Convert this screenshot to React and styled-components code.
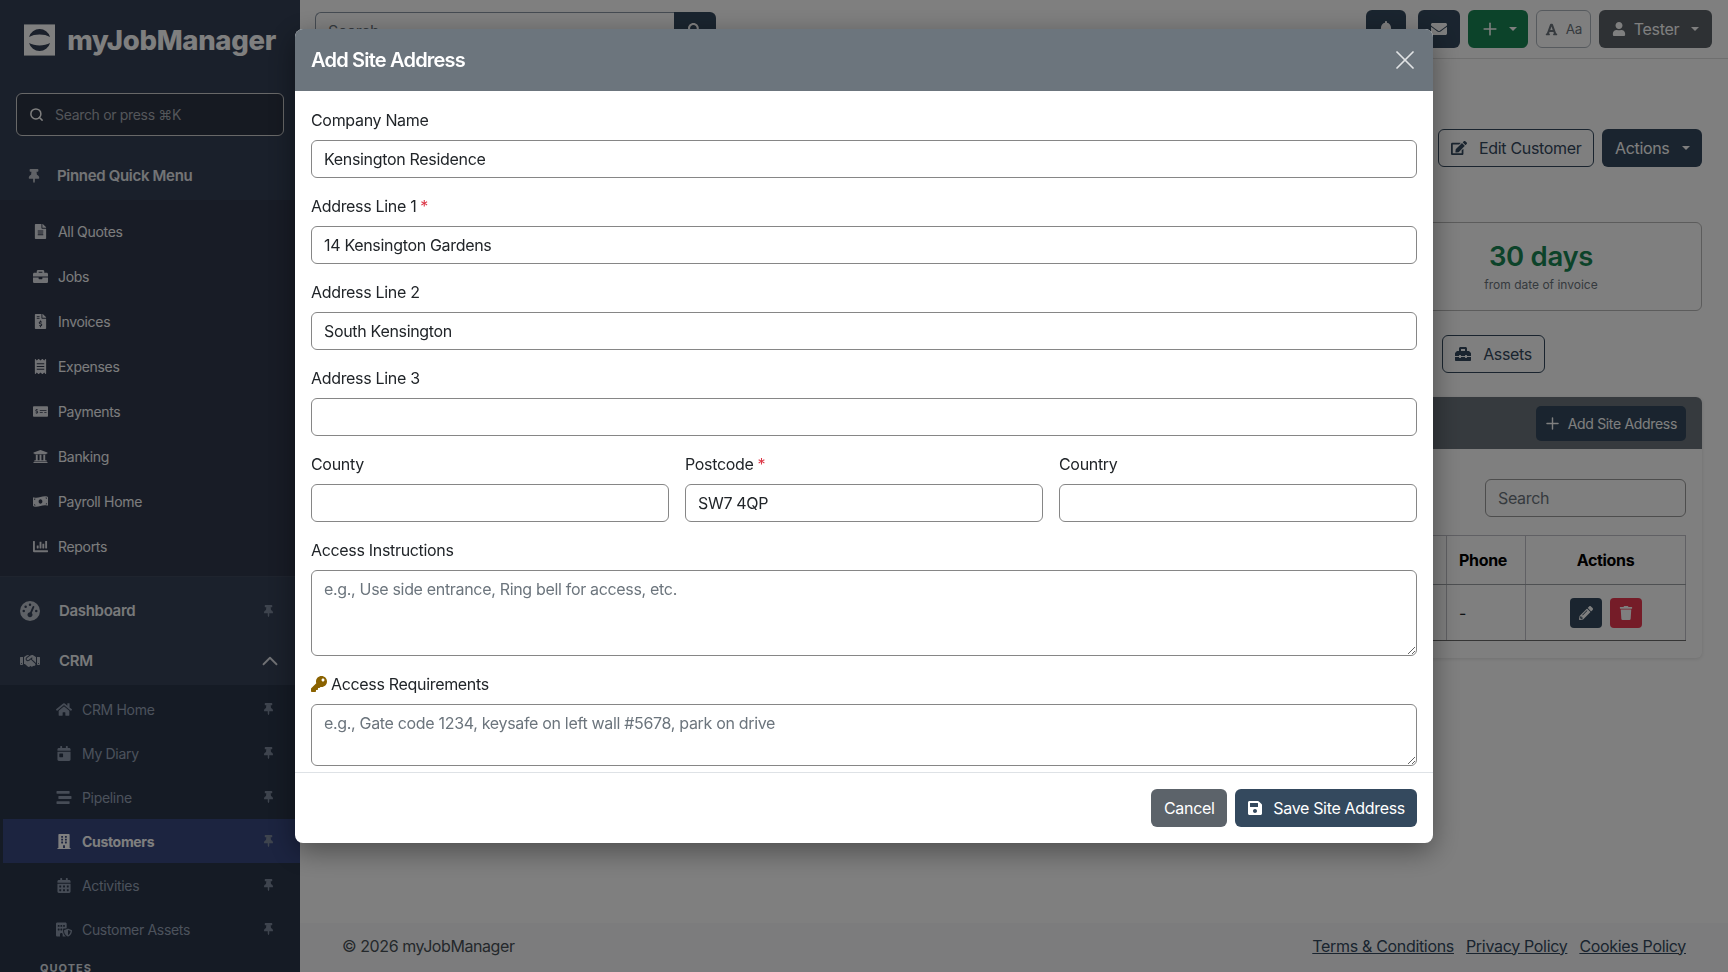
import React from 'react';
import styled, { createGlobalStyle } from 'styled-components';
import {
  FaBell,
  FaBriefcase,
  FaBuilding,
  FaCalendarAlt,
  FaCalendarDay,
  FaChartBar,
  FaEdit,
  FaEnvelope,
  FaFileAlt,
  FaFileInvoiceDollar,
  FaFont,
  FaHome,
  FaKey,
  FaMoneyBillWave,
  FaMoneyCheckAlt,
  FaPencilAlt,
  FaReceipt,
  FaSave,
  FaSearch,
  FaStream,
  FaThumbtack,
  FaToolbox,
  FaTrash,
  FaUniversity,
  FaUser,
} from 'react-icons/fa';
import { FaBuildingShield, FaGaugeHigh, FaHandshake } from 'react-icons/fa6';
import { ChevronUp, Plus, Search, X } from 'lucide-react';

const GlobalStyle = createGlobalStyle`
  * { box-sizing: border-box; }
  html, body { margin: 0; height: 100%; overflow: hidden; }
  body {
    font-family: Inter, "Liberation Sans", sans-serif;
    font-size: 16px;
    line-height: 1.5;
    letter-spacing: -0.02em;
    color: #212529;
    background: #fff;
  }
  button, input, textarea { letter-spacing: inherit; }
`;

const Shell = styled.div`
  display: flex;
  width: 1728px;
  height: 972px;
  overflow: hidden;
`;

/* ---------- sidebar ---------- */

const Sidebar = styled.aside`
  flex: 0 0 300px;
  height: 972px;
  overflow: hidden;
  background: #344056;
  color: #fff;
`;

const LogoRow = styled.div`
  display: flex;
  align-items: center;
  gap: 12px;
  padding: 24px 24px 37px;
`;

const LogoText = styled.span`
  font-size: 27.5px;
  line-height: 32px;
  font-weight: 800;
  letter-spacing: -0.3px;
  color: #fff;
`;

const SidebarSearch = styled.div`
  display: flex;
  align-items: center;
  gap: 11px;
  height: 43px;
  margin: 0 16px;
  padding: 0 12px;
  border: 1px solid #d0d0d0;
  border-radius: 6px;
  background: #2c3444;
  font-size: 14px;
  color: #a8acb4;

  svg { color: #fff; flex: none; }
`;

const PinnedHeader = styled.div`
  display: flex;
  align-items: center;
  gap: 16px;
  height: 48px;
  margin-top: 16px;
  padding-left: 27px;
  font-size: 15px;
  font-weight: 600;
  color: #e6e8ec;

  svg { color: #c0c4cc; font-size: 14px; flex: none; }
`;

const QuickList = styled.nav`
  padding: 9px 0 7px;
  background: #30384c;
  border-bottom: 1px solid #3e485c;
`;

const QuickItem = styled.a`
  display: flex;
  align-items: center;
  height: 45px;
  font-size: 14px;
  color: #f8f9fb;
`;

const QuickIcon = styled.span`
  display: flex;
  justify-content: center;
  width: 58px;
  padding: 0 1px 0 24px;
  font-size: 15px;
  color: #e0e2e8;
`;

const GroupList = styled.div`
  display: flex;
  flex-direction: column;
  gap: 2px;
  padding-top: 10px;
  background: #364258;
`;

const GroupRow = styled.div`
  display: flex;
  align-items: center;
  height: 48px;
  padding: 0 ${(p) => p.$right}px 0 20px;
  font-size: 15px;
  font-weight: 600;
  color: #f0f2f5;

  > svg:first-child { width: 20px; height: 20px; color: #bcc2cc; margin-right: 19px; flex: none; }
`;

const GroupLabel = styled.span`
  flex: 1;
`;

const PinIcon = styled(FaThumbtack)`
  width: 11px;
  height: 12px;
  color: #7c889c;
  flex: none;
`;

const SubList = styled.div`
  padding-top: 2px;
  background: #2a364a;
`;

const SubItem = styled.a`
  display: flex;
  align-items: center;
  height: 44px;
  margin-left: 3px;
  padding: 0 26px 0 53px;
  font-size: 14px;
  font-weight: ${(p) => (p.$active ? 700 : 400)};
  color: ${(p) => (p.$active ? '#fff' : '#98a4b8')};
  background: ${(p) => (p.$active ? '#384880' : 'transparent')};

  > span { flex: 1; }
  > svg:first-child {
    width: 16px;
    height: 15px;
    margin-right: 10px;
    color: ${(p) => (p.$active ? '#fff' : '#8c98ac')};
    flex: none;
  }
`;

const SectionCaption = styled.div`
  padding: 9px 0 0 40px;
  font-size: 11px;
  font-weight: 700;
  letter-spacing: 1px;
  color: #dfe2e8;
  background: #2a364a;
`;

/* ---------- page behind the dialog ---------- */

const Main = styled.main`
  flex: 1;
  min-width: 0;
  display: flex;
  flex-direction: column;
  height: 972px;
  background: #fff;
`;

const TopBar = styled.header`
  display: flex;
  align-items: center;
  justify-content: space-between;
  height: 59px;
  padding: 0 16px 0 15px;
  border-bottom: 1px solid #dfdfdf;
`;

const TopSearch = styled.div`
  display: flex;
  width: 401px;
  height: 38px;
  margin-top: 4px;
`;

const TopSearchInput = styled.input`
  flex: 1;
  min-width: 0;
  padding: 0 12px;
  font: inherit;
  border: 1px solid #8a96a4;
  border-right: 0;
  border-radius: 6px 0 0 6px;

  &::placeholder { color: #6c757d; }
`;

const TopSearchButton = styled.button`
  width: 42px;
  border: 0;
  border-radius: 0 6px 6px 0;
  color: #fff;
  background: #34495e;
`;

const TopActions = styled.div`
  display: flex;
  align-items: center;
  gap: 8px;
`;

const TopButton = styled.button`
  display: inline-flex;
  align-items: center;
  justify-content: center;
  gap: ${(p) => p.$gap || 0}px;
  width: ${(p) => p.$width}px;
  height: 38px;
  margin-right: ${(p) => p.$after || 0}px;
  padding: 0;
  font: inherit;
  color: #fff;
  border: 0;
  border-radius: 6px;
  background: ${(p) => p.$bg};
`;

const FontButton = styled(TopButton)`
  color: #6c757d;
  background: #fff;
  border: 1px solid #adb5bd;

  small { font-size: 13.5px; }
`;

const Caret = styled.span`
  display: inline-block;
  margin-left: ${(p) => p.$gap || 0}px;
  border-top: 4.8px solid currentColor;
  border-left: 4.8px solid transparent;
  border-right: 4.8px solid transparent;
`;

const Content = styled.div`
  flex: 1;
  padding: 70px 26px 0;
`;

const PageActions = styled.div`
  display: flex;
  justify-content: flex-end;
  gap: 8px;
`;

const OutlineButton = styled.button`
  display: inline-flex;
  align-items: center;
  gap: 12px;
  height: 38px;
  padding: 0 12px;
  font: inherit;
  color: #34495e;
  background: #fff;
  border: 1px solid #34495e;
  border-radius: 6px;
`;

const DarkButton = styled.button`
  display: inline-flex;
  align-items: center;
  height: 38px;
  padding: 0 12.5px;
  font: inherit;
  color: #fff;
  background: #34495e;
  border: 0;
  border-radius: 6px;
`;

const StatsRow = styled.div`
  display: flex;
  justify-content: flex-end;
  margin-top: 55px;
`;

const StatCard = styled.div`
  width: 322px;
  height: 89px;
  padding-top: 16px;
  text-align: center;
  border: 1px solid #b8b8b8;
  border-radius: 6px;
`;

const StatValue = styled.div`
  font-size: 27.5px;
  line-height: 34px;
  font-weight: 600;
  color: #198754;
`;

const StatNote = styled.div`
  margin-top: 3px;
  font-size: 12px;
  line-height: 18px;
  letter-spacing: 0;
  color: #6c757d;
`;

const TabsRow = styled.div`
  display: flex;
  justify-content: flex-end;
  gap: 9px;
  margin: 24px 0 24px;
  padding-right: 157px;
`;

const Panel = styled.section`
  border-radius: 6px;
  box-shadow: 0 1px 4px rgba(0, 0, 0, 0.12);
`;

const PanelHeader = styled.div`
  display: flex;
  justify-content: flex-end;
  align-items: center;
  height: 52px;
  padding: 0 16px;
  background: #6c757d;
  border-radius: 6px 6px 0 0;
`;

const AddButton = styled.button`
  display: inline-flex;
  align-items: center;
  gap: 6px;
  height: 35px;
  padding: 0 9px 0 7px;
  font-family: inherit;
  font-size: 14px;
  color: #fff;
  background: #34495e;
  border: 0;
  border-radius: 5px;
`;

const PanelBody = styled.div`
  padding: 30px 16px 17px;
`;

const TableSearchRow = styled.div`
  display: flex;
  justify-content: flex-end;
  margin-bottom: 18px;
`;

const TableSearch = styled.input`
  width: 201px;
  height: 38px;
  padding: 0 12px;
  font: inherit;
  border: 1px solid #9a9a9a;
  border-radius: 6px;

  &::placeholder { color: #6c757d; }
`;

const Table = styled.table`
  width: 100%;
  border-collapse: collapse;
  table-layout: fixed;
`;

const HeadCell = styled.th`
  width: ${(p) => (p.$width ? `${p.$width}px` : 'auto')};
  height: 49px;
  padding: 0 12px;
  font-weight: 700;
  text-align: ${(p) => p.$align || 'left'};
  color: #000;
  border: 1px solid #c0c0c8;
  border-bottom: 1px solid #9ca0a4;
`;

const BodyCell = styled.td`
  height: 56px;
  padding: 0 12px;
  text-align: ${(p) => p.$align || 'left'};
  border-left: 1px solid #c0c0c8;
  border-right: 1px solid #c0c0c8;
  border-bottom: 1px solid #6a6a6a;
`;

const RowActions = styled.div`
  display: flex;
  justify-content: center;
  gap: 8px;
`;

const RowButton = styled.button`
  display: flex;
  align-items: center;
  justify-content: center;
  width: 32px;
  height: 30px;
  padding: 0;
  font-size: 14px;
  color: #fff;
  background: ${(p) => p.$bg};
  border: 0;
  border-radius: 4px;
`;

const Footer = styled.footer`
  display: flex;
  justify-content: space-between;
  align-items: center;
  height: 49px;
  padding: 0 42px 4px;
  color: #495057;
  background: #f8f9fa;
`;

const Copyright = styled.span`
  letter-spacing: -0.42px;
`;

const FooterLinks = styled.div`
  display: flex;
  gap: 12px;
`;

const FooterLink = styled.a`
  color: #34495e;
  text-decoration: underline;
`;

/* ---------- dialog ---------- */

const Backdrop = styled.div`
  position: fixed;
  inset: 0;
  background: rgba(0, 0, 0, 0.5);
`;

const Dialog = styled.div`
  position: fixed;
  top: 29px;
  left: 295px;
  width: 1138px;
  background: #fff;
  border-radius: 8px;
  box-shadow: 0 8px 28px rgba(0, 0, 0, 0.4);
  overflow: hidden;
`;

const DialogHeader = styled.div`
  display: flex;
  align-items: center;
  justify-content: space-between;
  height: 62px;
  padding: 0 16px;
  color: #fff;
  background: #6c757d;
`;

const DialogTitle = styled.h5`
  margin: 0;
  font-size: 20px;
  line-height: 30px;
  font-weight: 600;
  letter-spacing: -0.8px;
`;

const CloseButton = styled.button`
  display: flex;
  padding: 0;
  margin-right: -4px;
  color: #fff;
  background: none;
  border: 0;
  opacity: 0.8;
`;

const DialogBody = styled.form`
  display: flex;
  flex-direction: column;
  gap: 16px;
  padding: 17px 16px 6px;
`;

const FieldRow = styled.div`
  display: grid;
  grid-template-columns: repeat(3, 1fr);
  gap: 16px;
`;

const Field = styled.div`
  display: flex;
  flex-direction: column;
  gap: 8px;
  min-width: 0;
`;

const Label = styled.label`
  display: flex;
  align-items: center;
  gap: 4px;
  height: 24px;
`;

const Required = styled.span`
  color: #dc3545;
`;

const KeyIcon = styled(FaKey)`
  width: 16px;
  height: 16px;
  color: #8a6200;
`;

const inputLook = `
  display: block;
  width: 100%;
  padding: 6px 12px;
  font-family: inherit;
  font-size: 16px;
  line-height: 24px;
  color: #212529;
  background: #fff;
  border: 1px solid #868686;
  border-radius: 6px;
  outline: none;

  &::placeholder { color: #6c757d; opacity: 1; }
`;

const Input = styled.input`
  ${inputLook}
  height: 38px;
`;

const TextArea = styled.textarea`
  ${inputLook}
  height: ${(p) => p.$height}px;
  resize: vertical;
`;

const DialogFooter = styled.div`
  display: flex;
  justify-content: flex-end;
  gap: 8px;
  padding: 16px;
  border-top: 1px solid #dee2e6;
`;

const FooterButton = styled.button`
  display: inline-flex;
  align-items: center;
  justify-content: center;
  gap: 10px;
  min-width: 76px;
  height: 38px;
  padding: 0 12px;
  font-family: inherit;
  font-size: 16px;
  color: #fff;
  background: ${(p) => p.$bg};
  border: 0;
  border-radius: 6px;
`;

const quickMenu = [
  { label: 'All Quotes', icon: FaFileAlt },
  { label: 'Jobs', icon: FaBriefcase },
  { label: 'Invoices', icon: FaFileInvoiceDollar },
  { label: 'Expenses', icon: FaReceipt },
  { label: 'Payments', icon: FaMoneyCheckAlt },
  { label: 'Banking', icon: FaUniversity },
  { label: 'Payroll Home', icon: FaMoneyBillWave },
  { label: 'Reports', icon: FaChartBar },
];

const crmMenu = [
  { label: 'CRM Home', icon: FaHome },
  { label: 'My Diary', icon: FaCalendarDay },
  { label: 'Pipeline', icon: FaStream },
  { label: 'Customers', icon: FaBuilding, active: true },
  { label: 'Activities', icon: FaCalendarAlt },
  { label: 'Customer Assets', icon: FaBuildingShield },
];

const LogoMark = () => (
  <svg width="32" height="32" viewBox="0 0 32 32">
    <rect width="32" height="32" fill="#fff" />
    <path d="M5.2 13A11.2 11.2 0 0 1 26.8 13C21 9.6 11 9.6 5.2 13Z" fill="#344056" />
    <path d="M5.2 19A11.2 11.2 0 0 0 26.8 19C21 22.4 11 22.4 5.2 19Z" fill="#344056" />
  </svg>
);

const SidebarNav = () => (
  <Sidebar>
    <LogoRow>
      <LogoMark />
      <LogoText>myJobManager</LogoText>
    </LogoRow>
    <SidebarSearch>
      <Search size={15} strokeWidth={2.4} />
      Search or press ⌘K
    </SidebarSearch>
    <PinnedHeader>
      <FaThumbtack />
      Pinned Quick Menu
    </PinnedHeader>
    <QuickList>
      {quickMenu.map((item) => (
        <QuickItem key={item.label}>
          <QuickIcon>
            <item.icon />
          </QuickIcon>
          {item.label}
        </QuickItem>
      ))}
    </QuickList>
    <GroupList>
      <GroupRow $right={26}>
        <FaGaugeHigh />
        <GroupLabel>Dashboard</GroupLabel>
        <PinIcon />
      </GroupRow>
      <GroupRow $right={17}>
        <FaHandshake />
        <GroupLabel>CRM</GroupLabel>
        <ChevronUp size={26} strokeWidth={1.7} color="#e0e2e8" />
      </GroupRow>
    </GroupList>
    <SubList>
      {crmMenu.map((item) => (
        <SubItem key={item.label} $active={item.active}>
          <item.icon />
          <span>{item.label}</span>
          <PinIcon />
        </SubItem>
      ))}
    </SubList>
    <SectionCaption>QUOTES</SectionCaption>
  </Sidebar>
);

const PageBehind = () => (
  <Main>
    <TopBar>
      <TopSearch>
        <TopSearchInput placeholder="Search" />
        <TopSearchButton>
          <FaSearch />
        </TopSearchButton>
      </TopSearch>
      <TopActions>
        <TopButton $width={40} $bg="#34495e" $after={4}>
          <FaBell />
        </TopButton>
        <TopButton $width={42} $bg="#34495e">
          <FaEnvelope />
        </TopButton>
        <TopButton $width={60} $bg="#198754">
          <Plus size={20} strokeWidth={1.9} />
          <Caret $gap={9} />
        </TopButton>
        <FontButton $width={55} $gap={8}>
          <FaFont size={13} />
          <small>Aa</small>
        </FontButton>
        <TopButton $width={113} $bg="#5c6268" $gap={8}>
          <FaUser size={14} />
          Tester
          <Caret $gap={4} />
        </TopButton>
      </TopActions>
    </TopBar>
    <Content>
      <PageActions>
        <OutlineButton>
          <FaEdit />
          Edit Customer
        </OutlineButton>
        <DarkButton>
          Actions
          <Caret $gap={12} />
        </DarkButton>
      </PageActions>
      <StatsRow>
        <StatCard>
          <StatValue>30 days</StatValue>
          <StatNote>from date of invoice</StatNote>
        </StatCard>
      </StatsRow>
      <TabsRow>
        <OutlineButton>Site Addresses</OutlineButton>
        <OutlineButton>
          <FaToolbox />
          Assets
        </OutlineButton>
      </TabsRow>
      <Panel>
        <PanelHeader>
          <AddButton>
            <Plus size={19} strokeWidth={1.8} />
            Add Site Address
          </AddButton>
        </PanelHeader>
        <PanelBody>
          <TableSearchRow>
            <TableSearch placeholder="Search" />
          </TableSearchRow>
          <Table>
            <thead>
              <tr>
                <HeadCell />
                <HeadCell $width={79}>Phone</HeadCell>
                <HeadCell $width={160} $align="center">
                  Actions
                </HeadCell>
              </tr>
            </thead>
            <tbody>
              <tr>
                <BodyCell />
                <BodyCell>-</BodyCell>
                <BodyCell $align="center">
                  <RowActions>
                    <RowButton $bg="#34495e">
                      <FaPencilAlt />
                    </RowButton>
                    <RowButton $bg="#ea3850">
                      <FaTrash />
                    </RowButton>
                  </RowActions>
                </BodyCell>
              </tr>
            </tbody>
          </Table>
        </PanelBody>
      </Panel>
    </Content>
    <Footer>
      <Copyright>© 2026 myJobManager</Copyright>
      <FooterLinks>
        <FooterLink>Terms &amp; Conditions</FooterLink>
        <FooterLink>Privacy Policy</FooterLink>
        <FooterLink>Cookies Policy</FooterLink>
      </FooterLinks>
    </Footer>
  </Main>
);

const SiteAddressDialog = () => (
  <Dialog role="dialog">
    <DialogHeader>
      <DialogTitle>Add Site Address</DialogTitle>
      <CloseButton>
        <X size={32} strokeWidth={1.3} />
      </CloseButton>
    </DialogHeader>
    <DialogBody>
      <Field>
        <Label>Company Name</Label>
        <Input defaultValue="Kensington Residence" />
      </Field>
      <Field>
        <Label>
          Address Line 1 <Required>*</Required>
        </Label>
        <Input defaultValue="14 Kensington Gardens" />
      </Field>
      <Field>
        <Label>Address Line 2</Label>
        <Input defaultValue="South Kensington" />
      </Field>
      <Field>
        <Label>Address Line 3</Label>
        <Input />
      </Field>
      <FieldRow>
        <Field>
          <Label>County</Label>
          <Input />
        </Field>
        <Field>
          <Label>
            Postcode <Required>*</Required>
          </Label>
          <Input defaultValue="SW7 4QP" />
        </Field>
        <Field>
          <Label>Country</Label>
          <Input />
        </Field>
      </FieldRow>
      <Field>
        <Label>Access Instructions</Label>
        <TextArea $height={86} placeholder="e.g., Use side entrance, Ring bell for access, etc." />
      </Field>
      <Field>
        <Label>
          <KeyIcon />
          Access Requirements
        </Label>
        <TextArea $height={62} placeholder="e.g., Gate code 1234, keysafe on left wall #5678, park on drive" />
      </Field>
    </DialogBody>
    <DialogFooter>
      <FooterButton $bg="#5c636a">Cancel</FooterButton>
      <FooterButton $bg="#34495e">
        <FaSave />
        Save Site Address
      </FooterButton>
    </DialogFooter>
  </Dialog>
);

const App = () => (
  <>
    <GlobalStyle />
    <Shell>
      <SidebarNav />
      <PageBehind />
    </Shell>
    <Backdrop />
    <SiteAddressDialog />
  </>
);

export default App;
